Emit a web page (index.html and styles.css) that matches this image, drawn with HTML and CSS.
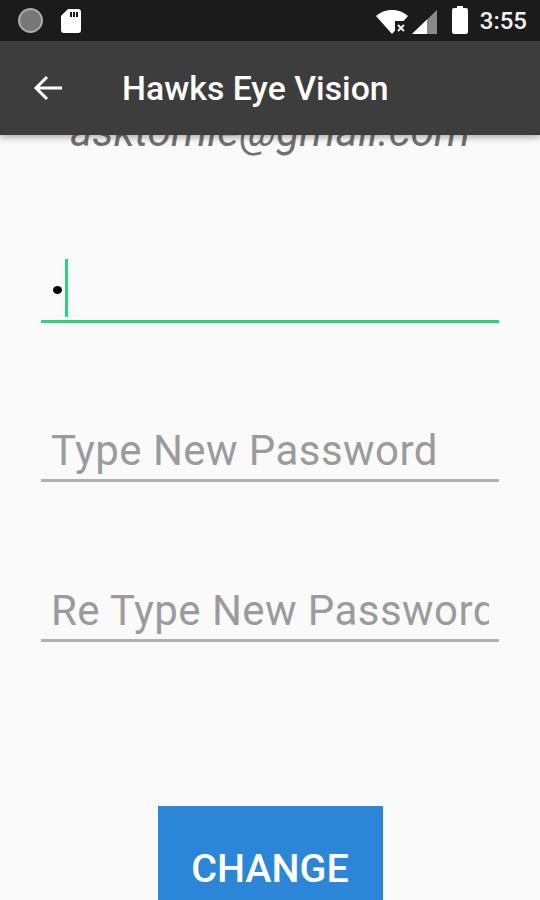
FILE: index.html
```html
<!DOCTYPE html>
<html lang="en">
<head>
<meta charset="utf-8">
<title>Hawks Eye Vision</title>
<link rel="stylesheet" href="styles.css">
</head>
<body>
<div class="phone">
  <header class="top">
    <div class="status">
      <div class="status-left">
        <span class="dot"></span>
        <svg class="sd" width="22" height="26" viewBox="0 0 22 26"><path fill="#fff" d="M8 1h10a3 3 0 0 1 3 3v18a3 3 0 0 1-3 3H4a3 3 0 0 1-3-3V8z"/><path fill="#1b1b1b" d="M10 4h2v5h-2zM13 4h2v5h-2zM16 4h2v5h-2z"/></svg>
      </div>
      <div class="status-right">
        <svg class="wifi" width="33" height="24" viewBox="0 0 33 24"><path fill="#fff" d="M0 6C5 1.500 11 0 16 0s11 1.500 16 6L16 24z"/><path fill="#1b1b1b" d="M19 11h14v13H19z"/><path stroke="#eee" stroke-width="2" d="M22 15l6 6M28 15l-6 6"/></svg>
        <svg class="signal" width="25" height="24" viewBox="0 0 25 24"><path fill="#8a8a8a" d="M25 0v24H0z"/><path fill="#fff" d="M15 9.600V24H0z"/></svg>
        <svg class="battery" width="16" height="28" viewBox="0 0 16 28"><path fill="#fff" d="M5 0h6v2h3a2 2 0 0 1 2 2v22a2 2 0 0 1-2 2H2a2 2 0 0 1-2-2V4a2 2 0 0 1 2-2h3z"/></svg>
        <span class="clock">3:55</span>
      </div>
    </div>
    <div class="appbar">
      <svg class="back" width="30" height="26" viewBox="0 0 30 26"><path fill="none" stroke="#fff" stroke-width="3" d="M29 13H3M14 2L3 13l11 11"/></svg>
      <h1 class="title">Hawks Eye Vision</h1>
    </div>
  </header>
  <main class="content">
    <p class="email">asktomie@gmail.com</p>
    <div class="field active"><span class="dot-char"></span><span class="caret"></span></div>
    <div class="field"><span class="hint">Type New Password</span></div>
    <div class="field"><span class="hint">Re Type New Password</span></div>
    <button class="change">CHANGE</button>
  </main>
</div>
</body>
</html>
```
FILE: styles.css
```css
* { box-sizing: border-box; }
html, body { margin: 0; padding: 0; }
body { font-family: Roboto, "Liberation Sans", sans-serif; background: #fafafa; }
.phone { width: 540px; height: 900px; overflow: hidden; display: flex; flex-direction: column; background: #fafafa; }
.top { position: relative; z-index: 2; box-shadow: 0 3px 6px rgba(0,0,0,.28); flex: none; }
.status { height: 41px; background: #1b1b1b; display: flex; justify-content: space-between; align-items: center; padding: 0 13px 0 18px; }
.status-left { display: flex; align-items: center; gap: 17px; }
.dot { width: 25px; height: 25px; border-radius: 50%; background: #777; border: 2px solid #aaa; }
.status-right { display: flex; align-items: center; }
.wifi { margin: 2px 3px 0 0; }
.signal { margin: 2px 15px 0 0; }
.battery { margin-top: -1px; }
.clock { margin-left: 12px; color: #f2f2f2; font-size: 24px; font-weight: 500; }
.appbar { height: 94px; background: #3d3d3d; display: flex; align-items: center; padding: 0 0 0 33px; }
.back { flex: none; }
.title { margin: 0 0 0 59px; color: #fff; font-size: 33.8px; font-weight: 500; }
.content { flex: 1; display: flex; flex-direction: column; overflow: hidden; padding: 0 41px 0; }
.email { flex: none; margin: -27px 0 0; text-align: center; font-size: 42.5px; line-height: 47px; font-style: italic; color: #707070; white-space: nowrap; }
.field { flex: none; height: 64px; border-bottom: 3px solid #b0b0b0; padding: 4px 10px 0 10px; display: flex; align-items: center; margin-top: 96px; }
.field.active { border-bottom-color: #27d67c; margin-top: 104px; padding: 0 0 0 12px; gap: 3px; }
.field.active + .field { margin-top: 95px; }
.dot-char { width: 9px; height: 8px; border-radius: 50%; background: #000; margin-top: 0; }
.caret { width: 3px; height: 58px; background: #27d67c; margin-top: -4px; }
.hint { display: block; flex: 1; min-width: 0; overflow: hidden; color: #9b9b9b; font-size: 42px; white-space: nowrap; line-height: 47px; letter-spacing: .43px; }
.change { align-self: center; margin-top: 164px; width: 225px; height: 124px; flex: none; border: 0; border-radius: 0; background: #2b86d8; color: #fff; font: 500 39.5px Roboto, sans-serif; padding: 0; }
```
